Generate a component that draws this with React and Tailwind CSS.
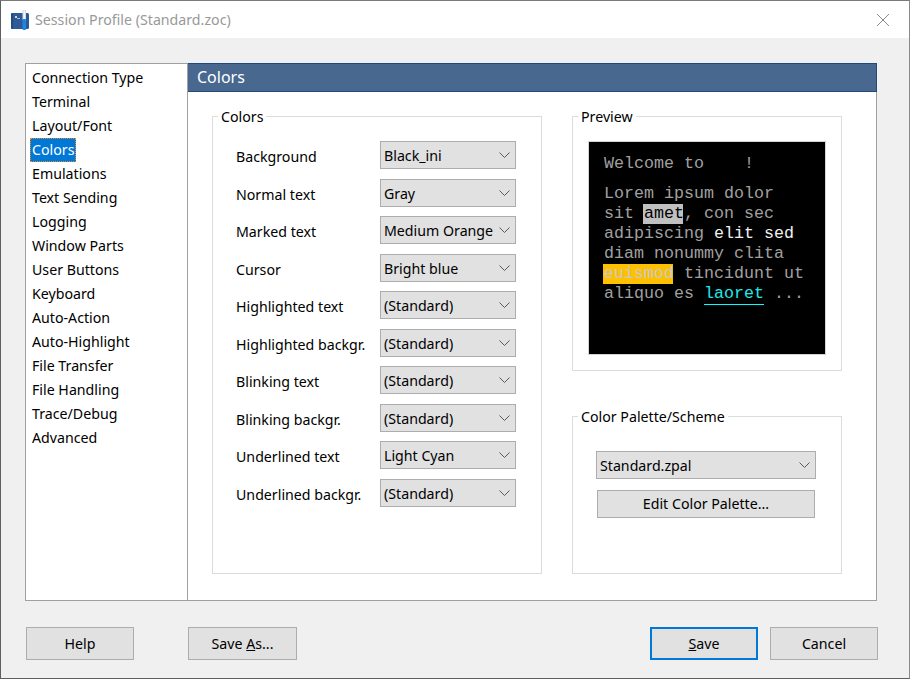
import React from "react";

const F = { fontFamily: '"Noto Sans", "Open Sans", sans-serif' };
const NAV = ["Connection Type","Terminal","Layout/Font","Colors","Emulations","Text Sending","Logging","Window Parts","User Buttons","Keyboard","Auto-Action","Auto-Highlight","File Transfer","File Handling","Trace/Debug","Advanced"];
const ROWS = [["Background","Black_ini"],["Normal text","Gray"],["Marked text","Medium Orange"],["Cursor","Bright blue"],["Highlighted text","(Standard)"],["Highlighted backgr.","(Standard)"],["Blinking text","(Standard)"],["Blinking backgr.","(Standard)"],["Underlined text","Light Cyan"],["Underlined backgr.","(Standard)"]];

function Chevron() {
  return (
    <svg width="11" height="6" viewBox="0 0 11 6" className="shrink-0" fill="none">
      <path d="M0.5 0.5 L5.5 5.5 L10.5 0.5" stroke="#5a5a5a" strokeWidth="1" />
    </svg>
  );
}

function Select({ value, className }) {
  return (
    <div className={"flex h-[28px] items-center justify-between border border-[#adadad] bg-[#e1e1e1] pl-[3px] pr-[5px] text-black " + className}>
      <span className="whitespace-nowrap pt-[2px]">{value}</span>
      <Chevron />
    </div>
  );
}

function Group({ title, className, children }) {
  return (
    <div className={"relative border border-[#dcdcdc] " + className}>
      <span className="absolute left-[5px] top-[-10px] bg-white px-[3px] text-[14.2px] leading-[20px] text-black">{title}</span>
      {children}
    </div>
  );
}

function Btn({ children, className }) {
  return (
    <button className={"flex h-[33px] w-[108px] items-center justify-center border border-[#adadad] bg-[#e1e1e1] text-black " + className}>
      {children}
    </button>
  );
}

export default function App() {
  return (
    <div className="flex h-[679px] w-[910px] flex-col overflow-hidden border border-t-[#7a7a7a] border-r-[#8a8a8a] border-b-[#5f5f5f] border-l-[#5f5f5f] bg-[#f0f0f0] text-[14.2px] leading-[20px]" style={F}>
      <div className="flex h-[37px] shrink-0 items-center bg-white pl-[9px] pr-[20px]">
        <svg width="20" height="20" viewBox="0 0 20 20" className="shrink-0">
          <rect x="1" y="3" width="18" height="16" rx="1.5" fill="#2d5a94" />
          <rect x="1" y="3" width="2" height="16" rx="1" fill="#234a7c" />
          <rect x="5" y="6" width="2" height="2" fill="#c4d3e4" />
          <rect x="7" y="8" width="3" height="1" fill="#a9bfd8" />
          <rect x="12.5" y="0" width="3.5" height="10" fill="#d5dbe2" />
          <rect x="13.5" y="0.5" width="1.5" height="9" fill="#f4f6f8" />
          <rect x="12.5" y="9" width="3.5" height="11" rx="1" fill="#1a86e2" />
        </svg>
        <span className="ml-[5px] text-[14.2px] text-[#999999]">Session Profile (Standard.zoc)</span>
        <svg width="12" height="12" viewBox="0 0 12 12" className="ml-auto" fill="none">
          <path d="M0 0 L12 12 M12 0 L0 12" stroke="#8a8a8a" strokeWidth="1" />
        </svg>
      </div>

      <div className="ml-[24px] mt-[25px] flex h-[538px] w-[852px] border border-[#a0a0a0] bg-white">
        <div className="flex w-[162px] shrink-0 flex-col items-start border-r border-[#a0a0a0] pl-[4px] pt-[2px]">
          {NAV.map((n) => (
            <div key={n} className={"flex h-[24px] items-center " + (n === "Colors" ? "w-[46px] border border-dotted border-[#f08a1d] bg-[#0078d7] px-[1px] text-white" : "px-[2px] text-black")}>
              {n}
            </div>
          ))}
        </div>
        <div className="flex min-w-0 flex-1 flex-col">
          <div className="-mt-px -mr-px flex h-[29px] items-center border border-l-0 border-[#1f4a7a] bg-[#48688f] pb-[2px] pl-[9px] text-[16px] text-white">Colors</div>
          <div className="flex gap-[30px] pl-[24px] pt-[24px]">
            <Group title="Colors" className="h-[458px] w-[330px] pl-[23px] pt-[24px]">
              <div className="flex flex-col gap-[9.5px]">
                {ROWS.map(([l, v]) => (
                  <div key={l} className="flex items-center">
                    <span className="w-[144px] shrink-0 whitespace-nowrap pt-[4px]">{l}</span>
                    <Select value={v} className="w-[136px]" />
                  </div>
                ))}
              </div>
            </Group>
            <div className="flex flex-col gap-[45px]">
              <Group title="Preview" className="h-[255px] w-[270px] pl-[15px] pt-[24px]">
                <div className="h-[214px] w-[238px] border border-[#d4d4d4] bg-black pl-[15px] pt-[12px] text-[16.67px] leading-[20px] text-[#a0a0a0]" style={{ fontFamily: '"Liberation Mono", monospace' }}>
                  <div className="mb-[10px] whitespace-pre">Welcome to    !</div>
                  <div className="whitespace-pre">Lorem ipsum dolor</div>
                  <div className="whitespace-pre">sit <span className="-ml-px mr-px inline-block h-[20px] w-[40px] bg-[#c0c0c0] pl-px text-black">amet</span>, con sec</div>
                  <div className="whitespace-pre">adipiscing <span className="text-[#f0f0f0]">elit sed</span></div>
                  <div className="whitespace-pre">diam nonummy clita</div>
                  <div className="whitespace-pre"><span className="-ml-px mr-px inline-block h-[20px] w-[70px] bg-[#ffc000] pl-px text-[#c8c8c8]">euismod</span> tincidunt ut</div>
                  <div className="whitespace-pre">aliquo es <span className="inline-block h-[21px] border-b border-[#00ffff] text-[#20e8e8]">laoret</span> ...</div>
                </div>
              </Group>
              <Group title="Color Palette/Scheme" className="h-[158px] w-[270px] pl-[23px] pt-[34px]">
                <Select value="Standard.zpal" className="w-[220px]" />
                <Btn className="ml-px mt-[11px] !h-[28px] !w-[218px]">Edit Color Palette...</Btn>
              </Group>
            </div>
          </div>
        </div>
      </div>

      <div className="ml-[25px] mt-[26px] flex w-[852px]">
        <Btn>Help</Btn>
        <Btn className="ml-[54px] !w-[109px]"><span>Save <u>A</u>s...</span></Btn>
        <Btn className="ml-auto !border-2 !border-[#0078d7]"><span><u>S</u>ave</span></Btn>
        <Btn className="ml-[12px]">Cancel</Btn>
      </div>
    </div>
  );
}
